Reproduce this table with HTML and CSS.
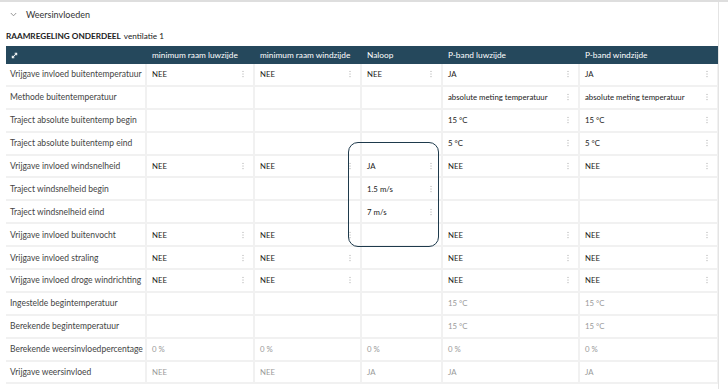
FILE: index.html
```html
<!DOCTYPE html>
<html lang="nl">
<head>
<meta charset="utf-8">
<title>Weersinvloeden</title>
<link rel="stylesheet" href="styles.css">
</head>
<body>
<div class="topbar"></div>
<div class="page">
  <div class="section">
    <svg class="chev" width="7" height="5" viewBox="0 0 7 5"><polyline points="0.8,1 3.5,3.8 6.2,1" fill="none" stroke="#8a8a8a" stroke-width="0.9"/></svg>
    <span>Weersinvloeden</span>
  </div>
  <div class="title"><b>RAAMREGELING ONDERDEEL</b> ventilatie 1</div>
  <div class="table">
    <div class="thead">
      <div class="th"><svg width="7" height="7" viewBox="0 0 8 8"><path d="M2 6 L6 2" stroke="#fff" stroke-width="1.2"/><path d="M4.2 1.5 H6.5 V3.8" fill="none" stroke="#fff" stroke-width="1.2"/><path d="M1.5 4.2 V6.5 H3.8" fill="none" stroke="#fff" stroke-width="1.2"/></svg></div>
      <div class="th">minimum raam luwzijde</div>
      <div class="th">minimum raam windzijde</div>
      <div class="th">Naloop</div>
      <div class="th">P-band luwzijde</div>
      <div class="th">P-band windzijde</div>
    </div>
    <div class="tbody">
      <div class="lab">Vrijgave invloed buitentemperatuur</div>
      <div class="cell"><span>NEE</span><i class="kebab"></i></div>
      <div class="cell"><span>NEE</span><i class="kebab"></i></div>
      <div class="cell"><span>NEE</span><i class="kebab"></i></div>
      <div class="cell"><span>JA</span><i class="kebab"></i></div>
      <div class="cell"><span>JA</span><i class="kebab"></i></div>

      <div class="lab">Methode buitentemperatuur</div>
      <div class="cell"></div>
      <div class="cell"></div>
      <div class="cell"></div>
      <div class="cell"><span>absolute meting temperatuur</span><i class="kebab"></i></div>
      <div class="cell"><span>absolute meting temperatuur</span><i class="kebab"></i></div>

      <div class="lab">Traject absolute buitentemp begin</div>
      <div class="cell"></div>
      <div class="cell"></div>
      <div class="cell"></div>
      <div class="cell"><span>15 °C</span><i class="kebab"></i></div>
      <div class="cell"><span>15 °C</span><i class="kebab"></i></div>

      <div class="lab">Traject absolute buitentemp eind</div>
      <div class="cell"></div>
      <div class="cell"></div>
      <div class="cell"></div>
      <div class="cell"><span>5 °C</span><i class="kebab"></i></div>
      <div class="cell"><span>5 °C</span><i class="kebab"></i></div>

      <div class="lab">Vrijgave invloed windsnelheid</div>
      <div class="cell"><span>NEE</span><i class="kebab"></i></div>
      <div class="cell"><span>NEE</span><i class="kebab"></i></div>
      <div class="cell"><span>JA</span><i class="kebab"></i></div>
      <div class="cell"><span>NEE</span><i class="kebab"></i></div>
      <div class="cell"><span>NEE</span><i class="kebab"></i></div>

      <div class="lab">Traject windsnelheid begin</div>
      <div class="cell"></div>
      <div class="cell"></div>
      <div class="cell"><span>1.5 m/s</span><i class="kebab"></i></div>
      <div class="cell"></div>
      <div class="cell"></div>

      <div class="lab">Traject windsnelheid eind</div>
      <div class="cell"></div>
      <div class="cell"></div>
      <div class="cell"><span>7 m/s</span><i class="kebab"></i></div>
      <div class="cell"></div>
      <div class="cell"></div>

      <div class="lab">Vrijgave invloed buitenvocht</div>
      <div class="cell"><span>NEE</span><i class="kebab"></i></div>
      <div class="cell"><span>NEE</span><i class="kebab"></i></div>
      <div class="cell"></div>
      <div class="cell"><span>NEE</span><i class="kebab"></i></div>
      <div class="cell"><span>NEE</span><i class="kebab"></i></div>

      <div class="lab">Vrijgave invloed straling</div>
      <div class="cell"><span>NEE</span><i class="kebab"></i></div>
      <div class="cell"><span>NEE</span><i class="kebab"></i></div>
      <div class="cell"></div>
      <div class="cell"><span>NEE</span><i class="kebab"></i></div>
      <div class="cell"><span>NEE</span><i class="kebab"></i></div>

      <div class="lab">Vrijgave invloed droge windrichting</div>
      <div class="cell"><span>NEE</span><i class="kebab"></i></div>
      <div class="cell"><span>NEE</span><i class="kebab"></i></div>
      <div class="cell"></div>
      <div class="cell"><span>NEE</span><i class="kebab"></i></div>
      <div class="cell"><span>NEE</span><i class="kebab"></i></div>

      <div class="lab">Ingestelde begintemperatuur</div>
      <div class="cell"></div>
      <div class="cell"></div>
      <div class="cell"></div>
      <div class="cell ro"><span>15 °C</span></div>
      <div class="cell ro"><span>15 °C</span></div>

      <div class="lab">Berekende begintemperatuur</div>
      <div class="cell"></div>
      <div class="cell"></div>
      <div class="cell"></div>
      <div class="cell ro"><span>15 °C</span></div>
      <div class="cell ro"><span>15 °C</span></div>

      <div class="lab">Berekende weersinvloedpercentage</div>
      <div class="cell ro"><span>0 %</span></div>
      <div class="cell ro"><span>0 %</span></div>
      <div class="cell ro"><span>0 %</span></div>
      <div class="cell ro"><span>0 %</span></div>
      <div class="cell ro"><span>0 %</span></div>

      <div class="lab">Vrijgave weersinvloed</div>
      <div class="cell ro"><span>NEE</span></div>
      <div class="cell ro"><span>NEE</span></div>
      <div class="cell ro"><span>JA</span></div>
      <div class="cell ro"><span>JA</span></div>
      <div class="cell ro"><span>JA</span></div>
    </div>
    <div class="highlight"></div>
  </div>
</div>
</body>
</html>
```

FILE: styles.css
```css
* { box-sizing: border-box; }
html, body { margin: 0; padding: 0; }
body {
  background: #ffffff;
  font-family: Lato, "Open Sans", "Liberation Sans", sans-serif;
  font-size: 8.5px;
  color: #333;
  width: 728px;
  height: 389px;
  overflow: hidden;
}
.topbar {
  height: 2px;
  background: #dedede;
}
.page {
  margin-left: 6px;
  width: 713px;
  border-right: 1px solid #e4e4e4;
  height: 387px;
}
.section {
  height: 24px;
  display: flex;
  align-items: center;
  gap: 9px;
  padding-left: 4px;
  font-size: 9px;
  color: #333;
}
.chev { display: block; }
.title {
  height: 19px;
  display: flex;
  align-items: center;
  font-size: 8.2px;
  color: #222;
  gap: 3px;
}
.title b { font-weight: 700; }
.table {
  position: relative;
  margin-top: 1px;
}
.thead, .tbody {
  display: grid;
  grid-template-columns: 139px 106px 105px 79px 135px 137px;
  column-gap: 2px;
}
.thead {
  background: #25485c;
  height: 18px;
  padding-right: 2px;
  color: #fff;
}
.th {
  display: flex;
  align-items: center;
  padding-left: 5px;
  font-weight: 400;
  font-size: 8.3px;
}
.tbody {
  background: #f1f1f1;
  grid-auto-rows: 20.9px;
  row-gap: 2px;
  padding: 0 2px 2px 0;
}
.lab, .cell {
  background: #fff;
  display: flex;
  align-items: center;
  padding-left: 4px;
}
.lab { color: #444; }
.cell {
  justify-content: space-between;
  padding-left: 5px;
  padding-right: 9px;
  color: #222;
  font-size: 7.8px;
}
.cell.ro { color: #9a9a9a; }
.kebab {
  display: block;
  width: 2px;
  height: 8px;
  background-image: radial-gradient(circle, #cdcdcd 0.9px, transparent 1px);
  background-size: 2px 2.7px;
}
.highlight {
  position: absolute;
  left: 342px;
  top: 96px;
  width: 91px;
  height: 105px;
  border: 1.5px solid #1e3a4c;
  border-radius: 10px;
  pointer-events: none;
}
```
